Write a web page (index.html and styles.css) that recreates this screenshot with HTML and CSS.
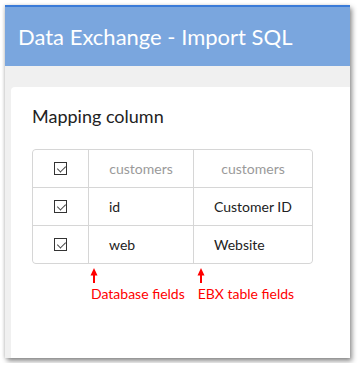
FILE: index.html
```html
<!DOCTYPE html>
<html lang="en">
<head>
    <meta charset="UTF-8">
    <title>Data Exchange - Import SQL</title>
    <link rel="stylesheet" href="styles.css">
</head>
<body>
    <div class="window">
        <div class="window-header">Data Exchange - Import SQL</div>

        <div class="window-body">
            <div class="card">
                <h2 class="card-title">Mapping column</h2>

                <div class="mapping">
                    <div class="cell cell-check"><span class="checkbox"></span></div>
                    <div class="cell cell-head">customers</div>
                    <div class="cell cell-head">customers</div>

                    <div class="cell cell-check"><span class="checkbox"></span></div>
                    <div class="cell">id</div>
                    <div class="cell">Customer ID</div>

                    <div class="cell cell-check"><span class="checkbox"></span></div>
                    <div class="cell">web</div>
                    <div class="cell">Website</div>
                </div>

                <div class="notes">
                    <div class="note note-db">
                        <svg class="arrow" width="8" height="15" viewBox="0 0 8 15">
                            <polygon points="4,0 0.5,7.5 7.5,7.5" fill="#ff0000"/>
                            <rect x="3" y="6" width="2" height="9" fill="#ff0000"/>
                        </svg>
                        <span>Database fields</span>
                    </div>
                    <div class="note note-ebx">
                        <svg class="arrow" width="8" height="15" viewBox="0 0 8 15">
                            <polygon points="4,0 0.5,7.5 7.5,7.5" fill="#ff0000"/>
                            <rect x="3" y="6" width="2" height="9" fill="#ff0000"/>
                        </svg>
                        <span>EBX table fields</span>
                    </div>
                </div>
            </div>
        </div>
    </div>
</body>
</html>
```

FILE: styles.css
```css
:root {
    --header: #7aa6de;
    --header-top: #3a7bd8;
    --body-bg: #f0f0f0;
    --line: #d6d6d6;
    --text: #222222;
    --muted: #9a9a9a;
    --note: #ff0000;
}

* {
    margin: 0;
    padding: 0;
    box-sizing: border-box;
}

body {
    font-family: Lato, 'Open Sans', sans-serif;
    background: #ffffff;
    padding: 5px;
    color: var(--text);
}

.window {
    width: 345px;
    height: 353px;
    display: flex;
    flex-direction: column;
    border-top: 2px solid var(--header-top);
    background: var(--body-bg);
    box-shadow: 2px 3px 5px rgba(0,0,0,0.45), -1px 0 3px rgba(0,0,0,0.12);
}

.window-header {
    height: 59px;
    background: var(--header);
    color: #ffffff;
    font-size: 22px;
    line-height: 27px;
    padding: 16px 0 0 13px;
}

.window-body {
    flex: 1;
    display: flex;
    padding: 21px 0 0 6px;
}

.card {
    flex: 1;
    background: #ffffff;
    border-radius: 4px 0 0 0;
    padding: 18px 0 0 21px;
}

.card-title {
    font-size: 18px;
    font-weight: 400;
    line-height: 22px;
    margin-bottom: 22px;
}

.mapping {
    display: grid;
    grid-template-columns: 55px 104px 118px;
    grid-auto-rows: 37px;
    gap: 1px;
    width: 281px;
    background: var(--line);
    border: 1px solid var(--line);
    border-radius: 4px;
    overflow: hidden;
}

.cell {
    background: #ffffff;
    display: flex;
    align-items: center;
    padding-left: 20px;
    font-size: 14px;
}

.cell-head {
    justify-content: center;
    padding-left: 0;
    color: var(--muted);
}

.cell-check {
    justify-content: center;
    padding-left: 0;
}

.checkbox {
    width: 13px;
    height: 13px;
    border: 1px solid #333333;
    position: relative;
}

.checkbox::after {
    content: '';
    position: absolute;
    left: 4px;
    top: 1px;
    width: 4px;
    height: 7px;
    border: solid #444444;
    border-width: 0 1px 1px 0;
    transform: rotate(45deg);
}

.notes {
    display: flex;
    margin-top: 4px;
    padding-left: 59px;
    gap: 13px;
}

.note {
    display: flex;
    flex-direction: column;
    align-items: flex-start;
    color: var(--note);
    font-size: 14px;
    line-height: 17px;
}

.arrow {
    display: block;
    margin: 0 0 2px -1px;
}
```
